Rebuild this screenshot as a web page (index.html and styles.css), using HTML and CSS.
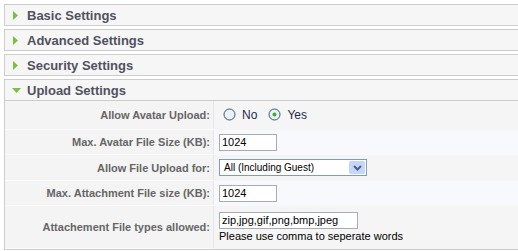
FILE: index.html
```html
<!DOCTYPE html>
<html lang="en">
<head>
<meta charset="UTF-8">
<title>Forum Settings</title>
<link rel="stylesheet" href="styles.css">
</head>
<body>

<div class="panels">
    <div class="panel">
        <div class="panel-head">
            <svg class="arrow" width="5" height="9" viewBox="0 0 5 9"><polygon points="0,0 5,4.5 0,9" fill="#7cc043"/></svg>
            Basic Settings
        </div>
    </div>
    <div class="panel">
        <div class="panel-head">
            <svg class="arrow" width="5" height="9" viewBox="0 0 5 9"><polygon points="0,0 5,4.5 0,9" fill="#7cc043"/></svg>
            Advanced Settings
        </div>
    </div>
    <div class="panel">
        <div class="panel-head">
            <svg class="arrow" width="5" height="9" viewBox="0 0 5 9"><polygon points="0,0 5,4.5 0,9" fill="#7cc043"/></svg>
            Security Settings
        </div>
    </div>
    <div class="panel open">
        <div class="panel-head">
            <svg class="arrow-down" width="9" height="5" viewBox="0 0 9 5"><polygon points="0,0 9,0 4.5,5" fill="#7cc043"/></svg>
            Upload Settings
        </div>
        <table class="params">
            <tr class="r1">
                <td class="key">Allow Avatar Upload:</td>
                <td class="val">
                    <span class="radio">
                        <svg width="13" height="13" viewBox="0 0 13 13"><circle cx="6.5" cy="6.5" r="5.5" fill="#eef1f4" stroke="#2b5a86"/></svg>
                        No
                    </span>
                    <span class="radio">
                        <svg width="13" height="13" viewBox="0 0 13 13"><circle cx="6.5" cy="6.5" r="5.5" fill="#eef1f4" stroke="#2b5a86"/><circle cx="6.5" cy="6.5" r="2" fill="#2eb42e"/></svg>
                        Yes
                    </span>
                </td>
            </tr>
            <tr class="r2">
                <td class="key">Max. Avatar File Size (KB):</td>
                <td class="val"><span class="textbox small">1024</span></td>
            </tr>
            <tr class="r3">
                <td class="key">Allow File Upload for:</td>
                <td class="val">
                    <span class="select">
                        <span class="select-text">All (Including Guest)</span>
                        <span class="select-btn">
                            <svg width="9" height="6" viewBox="0 0 9 6"><polyline points="1,1 4.5,4.5 8,1" fill="none" stroke="#4d6185" stroke-width="2"/></svg>
                        </span>
                    </span>
                </td>
            </tr>
            <tr class="r4">
                <td class="key">Max. Attachment File size (KB):</td>
                <td class="val"><span class="textbox small">1024</span></td>
            </tr>
            <tr class="r5">
                <td class="key">Attachement File types allowed:</td>
                <td class="val">
                    <span class="textbox wide">zip,jpg,gif,png,bmp,jpeg</span>
                    <div class="hint">Please use comma to seperate words</div>
                </td>
            </tr>
        </table>
    </div>
</div>

</body>
</html>
```

FILE: styles.css
```css
body {
    margin: 0;
    padding: 0;
    background-color: #fff;
    font-family: "Liberation Sans", Arial, sans-serif;
    overflow: hidden;
}

.panels {
    padding: 4px 0 0 4px;
    width: 540px;
}

.panel {
    border: 1px solid #cccccc;
    margin-bottom: 3px;
    background-color: #f6f6f6;
}

.panel-head {
    height: 20px;
    display: flex;
    align-items: center;
    padding-left: 8px;
    font-size: 13px;
    font-weight: bold;
    color: #51515f;
}

.arrow {
    margin-right: 9px;
    margin-top: 1px;
}

.arrow-down {
    margin-left: -1px;
    margin-right: 6px;
}

.open .panel-head {
    border-bottom: 1px solid #cccccc;
}

.params {
    width: 100%;
    border-collapse: collapse;
}

.params td {
    padding: 0;
    vertical-align: middle;
}

.key {
    width: 205px;
    padding-right: 3px !important;
    text-align: right;
    font-size: 11px;
    font-weight: bold;
    color: #666666;
    background-color: #f4f4f4;
    border-right: 1px solid #e6e6e6;
    border-bottom: 1px solid #fbfbfb;
}

.val {
    padding-left: 5px !important;
    font-size: 11px;
    color: #000;
}

.r1 td { height: 28px; }
.r2 td { height: 24px; }
.r3 td { height: 25px; }
.r4 td { height: 24px; }
.r5 td { height: 42px; }

.r1 .val, .r3 .val, .r5 .val {
    background-color: #f5f5f5;
}

.r2 .val, .r4 .val {
    background-color: #f8f9fd;
}

.radio {
    display: inline-flex;
    align-items: center;
    margin-left: 4px;
    margin-right: 4px;
    color: #1e2a50;
    font-size: 12px;
}

.radio svg {
    margin-right: 6px;
}

.textbox {
    display: inline-block;
    box-sizing: border-box;
    height: 17px;
    line-height: 15px;
    border: 1px solid #a5acb5;
    background-color: #fff;
    padding-left: 2px;
    vertical-align: middle;
}

.small {
    width: 58px;
}

.wide {
    width: 139px;
    margin-top: 4px;
}

.select {
    display: inline-flex;
    align-items: center;
    box-sizing: border-box;
    width: 148px;
    height: 17px;
    border: 1px solid #7f9db9;
    background-color: #fff;
    vertical-align: middle;
}

.select-text {
    flex: 1;
    padding-left: 4px;
    font-size: 10px;
}

.select-btn {
    width: 16px;
    height: 13px;
    margin-right: 1px;
    background-color: #c6d6fa;
    border-radius: 2px;
    display: flex;
    align-items: center;
    justify-content: center;
}

.hint {
    margin-top: 1px;
    margin-bottom: 4px;
    font-size: 11px;
}
```
